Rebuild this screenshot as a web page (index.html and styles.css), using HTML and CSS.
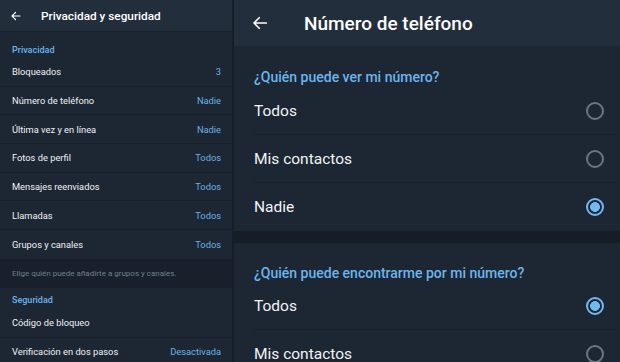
FILE: index.html
```html
<!DOCTYPE html>
<html lang="es">
<head>
<meta charset="utf-8">
<link rel="stylesheet" href="styles.css">
</head>
<body>
<div class="screen">
  <aside class="left">
    <header class="lhead">
      <svg class="larrow" viewBox="0 0 24 24" width="12" height="12"><path d="M20 12H5M11 5l-7 7 7 7" fill="none" stroke="#fff" stroke-width="2.4" stroke-linecap="round" stroke-linejoin="round"/></svg>
      <span class="ltitle">Privacidad y seguridad</span>
    </header>
    <div class="lsec first">Privacidad</div>
    <div class="lrow"><span>Bloqueados</span><span class="val">3</span></div>
    <div class="lrow"><span>Número de teléfono</span><span class="val">Nadie</span></div>
    <div class="lrow"><span>Última vez y en línea</span><span class="val">Nadie</span></div>
    <div class="lrow"><span>Fotos de perfil</span><span class="val">Todos</span></div>
    <div class="lrow"><span>Mensajes reenviados</span><span class="val">Todos</span></div>
    <div class="lrow"><span>Llamadas</span><span class="val">Todos</span></div>
    <div class="lrow last"><span>Grupos y canales</span><span class="val">Todos</span></div>
    <div class="hint">Elige quién puede añadirte a grupos y canales.</div>
    <div class="lsec">Seguridad</div>
    <div class="lrow"><span>Código de bloqueo</span></div>
    <div class="lrow last"><span>Verificación en dos pasos</span><span class="val">Desactivada</span></div>
  </aside>
  <main class="right">
    <header class="rhead">
      <svg class="rarrow" viewBox="0 0 24 24" width="18" height="18"><path d="M20.5 12H4.5M11 5l-7 7 7 7" fill="none" stroke="#fff" stroke-width="2.2" stroke-linecap="round" stroke-linejoin="round"/></svg>
      <span class="rtitle">Número de teléfono</span>
    </header>
    <section class="rsec">
      <div class="q first">¿Quién puede ver mi número?</div>
      <div class="opt"><span>Todos</span><span class="radio"></span></div>
      <div class="opt"><span>Mis contactos</span><span class="radio"></span></div>
      <div class="opt last"><span>Nadie</span><span class="radio on"></span></div>
    </section>
    <div class="gap"></div>
    <section class="rsec">
      <div class="q">¿Quién puede encontrarme por mi número?</div>
      <div class="opt"><span>Todos</span><span class="radio on"></span></div>
      <div class="opt"><span>Mis contactos</span><span class="radio"></span></div>
    </section>
  </main>
</div>
</body>
</html>
```
FILE: styles.css
```css
* { box-sizing: border-box; }
html, body { margin: 0; padding: 0; }
body {
  width: 620px; height: 362px; overflow: hidden;
  background: #1d2733;
  font-family: Roboto, "Noto Sans", "Liberation Sans", sans-serif;
  color: #f2f4f6;
}
.screen { display: flex; height: 362px; }
.left {
  width: 234px; flex: none; background: #1d2733;
  border-right: 2px solid #151d26;
  display: flex; flex-direction: column;
}
.lhead {
  height: 32px; flex: none; background: #232e3c;
  display: flex; align-items: center;
  border-bottom: 1px solid #18212b;
}
.larrow { margin-left: 10px; }
.ltitle { margin-left: 19px; font-size: 11.8px; font-weight: 500; color: #fff; }
.lsec {
  flex: none; font-size: 9px; font-weight: 500; color: #6cb4ee;
  line-height: 12px; padding: 6px 12px 3px;
}
.lsec.first { padding-top: 12px; padding-bottom: 2px; }
.lrow {
  flex: none; height: 28.7px; display: flex; align-items: center; justify-content: space-between;
  padding: 0 11px 0 12px; font-size: 9.3px; color: #f0f2f4;
  border-bottom: 1px solid #18212b;
}
.lrow.last { border-bottom: none; }
.val { color: #6cb0e4; }
.hint {
  flex: none; height: 29px; background: #18212b;
  font-size: 8px; color: #6f7e8d; padding: 0 12px;
  display: flex; align-items: center;
}
.right { flex: 1; display: flex; flex-direction: column; background: #1d2733; }
.rhead {
  height: 46px; flex: none; background: #232e3c;
  display: flex; align-items: center;
}
.rarrow { margin-left: 17px; }
.rtitle { margin-left: 35px; font-size: 19px; font-weight: 500; color: #fff; }
.rsec { flex: none; }
.q {
  font-size: 14px; font-weight: 500; color: #6cb4ee;
  line-height: 18px; padding: 21px 20px 0; height: 39px;
}
.q.first { padding-top: 22px; height: 41px; }
.opt {
  height: 48px; display: flex; align-items: center; justify-content: space-between;
  margin-left: 20px; padding-right: 16px;
  font-size: 15.5px; color: #f2f4f6;
  border-bottom: 1px solid #18212b;
}
.opt.last { border-bottom: none; }
.radio {
  width: 18px; height: 18px; border-radius: 50%;
  border: 2px solid #6b7683; flex: none;
}
.radio.on {
  border-color: #71b9f0;
  background: radial-gradient(circle, #71b9f0 0 4.6px, transparent 5.2px);
}
.gap { height: 12px; flex: none; background: #151e27; }
```
